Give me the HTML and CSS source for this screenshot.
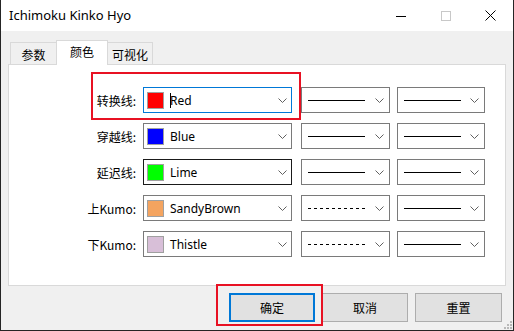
FILE: index.html
```html
<!DOCTYPE html>
<html lang="zh">
<head>
<meta charset="utf-8">
<title>Ichimoku Kinko Hyo</title>
<link rel="stylesheet" href="styles.css">
</head>
<body>
<div class="window">
  <div class="titlebar">
    <div class="title">Ichimoku Kinko Hyo</div>
    <div class="caption">
      <div class="cbtn"><svg width="10" height="10" viewBox="0 0 10 10"><line x1="0" y1="5.5" x2="10" y2="5.5" stroke="#000" stroke-width="1"/></svg></div>
      <div class="cbtn"><svg width="10" height="10" viewBox="0 0 10 10"><rect x="0.5" y="0.5" width="9" height="9" fill="none" stroke="#c8c8c8" stroke-width="1"/></svg></div>
      <div class="cbtn"><svg width="11" height="11" viewBox="0 0 11 11"><path d="M0.5 0.5 L10.5 10.5 M10.5 0.5 L0.5 10.5" stroke="#000" stroke-width="1" fill="none"/></svg></div>
    </div>
  </div>
  <div class="client">
    <div class="tabs">
      <div class="tab t1">参数</div>
      <div class="tab active">颜色</div>
      <div class="tab t3">可视化</div>
    </div>
    <div class="panel">
      <div class="row">
        <div class="label">转换线:</div>
        <div class="combo color focused"><span class="sw" style="background:#ff0000"></span><span class="caret"></span><span class="cname">Red</span><svg class="chev" width="9" height="5" viewBox="0 0 9 5"><path d="M0.5 0.5 L4.5 4.5 L8.5 0.5" stroke="#606060" fill="none"/></svg></div>
        <div class="combo line"><span class="ln solid"></span><svg class="chev" width="9" height="5" viewBox="0 0 9 5"><path d="M0.5 0.5 L4.5 4.5 L8.5 0.5" stroke="#606060" fill="none"/></svg></div>
        <div class="combo line l2"><span class="ln solid"></span><svg class="chev" width="9" height="5" viewBox="0 0 9 5"><path d="M0.5 0.5 L4.5 4.5 L8.5 0.5" stroke="#606060" fill="none"/></svg></div>
      </div>
      <div class="row">
        <div class="label">穿越线:</div>
        <div class="combo color"><span class="sw" style="background:#0000ff"></span><span class="cname">Blue</span><svg class="chev" width="9" height="5" viewBox="0 0 9 5"><path d="M0.5 0.5 L4.5 4.5 L8.5 0.5" stroke="#606060" fill="none"/></svg></div>
        <div class="combo line"><span class="ln solid"></span><svg class="chev" width="9" height="5" viewBox="0 0 9 5"><path d="M0.5 0.5 L4.5 4.5 L8.5 0.5" stroke="#606060" fill="none"/></svg></div>
        <div class="combo line l2"><span class="ln solid"></span><svg class="chev" width="9" height="5" viewBox="0 0 9 5"><path d="M0.5 0.5 L4.5 4.5 L8.5 0.5" stroke="#606060" fill="none"/></svg></div>
      </div>
      <div class="row">
        <div class="label">延迟线:</div>
        <div class="combo color hover"><span class="sw" style="background:#00ff00"></span><span class="cname">Lime</span><svg class="chev" width="9" height="5" viewBox="0 0 9 5"><path d="M0.5 0.5 L4.5 4.5 L8.5 0.5" stroke="#606060" fill="none"/></svg></div>
        <div class="combo line"><span class="ln solid"></span><svg class="chev" width="9" height="5" viewBox="0 0 9 5"><path d="M0.5 0.5 L4.5 4.5 L8.5 0.5" stroke="#606060" fill="none"/></svg></div>
        <div class="combo line l2"><span class="ln solid"></span><svg class="chev" width="9" height="5" viewBox="0 0 9 5"><path d="M0.5 0.5 L4.5 4.5 L8.5 0.5" stroke="#606060" fill="none"/></svg></div>
      </div>
      <div class="row">
        <div class="label">上Kumo:</div>
        <div class="combo color"><span class="sw" style="background:#f4a460"></span><span class="cname">SandyBrown</span><svg class="chev" width="9" height="5" viewBox="0 0 9 5"><path d="M0.5 0.5 L4.5 4.5 L8.5 0.5" stroke="#606060" fill="none"/></svg></div>
        <div class="combo line"><span class="ln dash"></span><svg class="chev" width="9" height="5" viewBox="0 0 9 5"><path d="M0.5 0.5 L4.5 4.5 L8.5 0.5" stroke="#606060" fill="none"/></svg></div>
        <div class="combo line l2"><span class="ln solid"></span><svg class="chev" width="9" height="5" viewBox="0 0 9 5"><path d="M0.5 0.5 L4.5 4.5 L8.5 0.5" stroke="#606060" fill="none"/></svg></div>
      </div>
      <div class="row">
        <div class="label">下Kumo:</div>
        <div class="combo color"><span class="sw" style="background:#d8bfd8"></span><span class="cname">Thistle</span><svg class="chev" width="9" height="5" viewBox="0 0 9 5"><path d="M0.5 0.5 L4.5 4.5 L8.5 0.5" stroke="#606060" fill="none"/></svg></div>
        <div class="combo line"><span class="ln dash"></span><svg class="chev" width="9" height="5" viewBox="0 0 9 5"><path d="M0.5 0.5 L4.5 4.5 L8.5 0.5" stroke="#606060" fill="none"/></svg></div>
        <div class="combo line l2"><span class="ln solid"></span><svg class="chev" width="9" height="5" viewBox="0 0 9 5"><path d="M0.5 0.5 L4.5 4.5 L8.5 0.5" stroke="#606060" fill="none"/></svg></div>
      </div>
    </div>
    <div class="buttons">
      <div class="btn default">确定</div>
      <div class="btn">取消</div>
      <div class="btn wide">重置</div>
    </div>
  </div>
  <div class="mark mark1"></div>
  <div class="mark mark2"></div>
  <svg class="grip" width="8" height="8" viewBox="0 0 8 8">
    <rect x="6" y="0" width="2" height="2" fill="#b8b8b8"/>
    <rect x="3" y="3" width="2" height="2" fill="#b8b8b8"/>
    <rect x="6" y="3" width="2" height="2" fill="#b8b8b8"/>
    <rect x="0" y="6" width="2" height="2" fill="#b8b8b8"/>
    <rect x="3" y="6" width="2" height="2" fill="#b8b8b8"/>
    <rect x="6" y="6" width="2" height="2" fill="#b8b8b8"/>
  </svg>
</div>
</body>
</html>
```
FILE: styles.css
```css
html, body {
  margin: 0;
  padding: 0;
}
body {
  background: #252525;
  width: 514px;
  height: 331px;
  overflow: hidden;
  font-family: "Noto Sans", "Noto Sans CJK SC", sans-serif;
  font-size: 12px;
  color: #000;
}
.window {
  position: relative;
  margin-left: 1px;
  width: 512px;
  height: 330px;
  background: #f0f0f0;
  display: flex;
  flex-direction: column;
}
.titlebar {
  height: 31px;
  background: #fff;
  display: flex;
  align-items: center;
  justify-content: space-between;
}
.title {
  padding-left: 8px;
  font-size: 13px;
  margin-top: -1px;
}
.caption {
  display: flex;
  height: 31px;
}
.cbtn {
  width: 45px;
  height: 31px;
  display: flex;
  align-items: center;
  justify-content: center;
}
.cbtn svg { display: block; }
.client {
  flex: 1;
  padding: 9px 7px 0 7px;
  display: flex;
  flex-direction: column;
}
.tabs {
  display: flex;
  align-items: flex-end;
  height: 24px;
  padding-left: 2px;
  font-family: "Noto Sans CJK SC", sans-serif;
}
.tab {
  box-sizing: border-box;
  height: 22px;
  border: 1px solid #d9d9d9;
  border-bottom: none;
  background: #f0f0f0;
  display: flex;
  align-items: center;
  justify-content: center;
  padding-top: 1px;
}
.t1 { width: 46px; border-right: none; }
.t3 { width: 45px; border-left: none; }
.tab.active {
  width: 52px;
  height: 25px;
  margin-bottom: -1px;
  background: #fff;
  position: relative;
  z-index: 1;
  padding-top: 0;
  padding-bottom: 3px;
}
.panel {
  box-sizing: border-box;
  height: 222px;
  background: #fff;
  border: 1px solid #d9d9d9;
  padding-top: 22px;
  display: flex;
  flex-direction: column;
  gap: 10px;
}
.row {
  display: flex;
  align-items: center;
  height: 26px;
}
.label {
  width: 127px;
  margin-right: 7px;
  text-align: right;
  font-family: "Noto Sans CJK SC", sans-serif;
  font-size: 12px;
}
.combo {
  box-sizing: border-box;
  height: 26px;
  border: 1px solid #7a7a7a;
  background: #fff;
  display: flex;
  align-items: center;
  position: relative;
}
.combo.color {
  width: 149px;
  padding-left: 3px;
}
.combo.focused { border-color: #0078d7; }
.combo.hover { border-color: #1a1a1a; }
.combo.line {
  width: 89px;
  margin-left: 9px;
  padding-left: 6px;
}
.combo.line.l2 {
  width: 88px;
  margin-left: 7px;
}
.sw {
  box-sizing: border-box;
  width: 17px;
  height: 17px;
  border: 1px solid #a0a0a0;
  flex: none;
}
.caret {
  width: 1px;
  height: 15px;
  background: #000;
  margin-left: 6px;
  margin-right: -1px;
}
.cname {
  margin-left: 6px;
  font-size: 12px;
  flex: 1;
}
.caret + .cname { margin-left: 0; }
.chev {
  display: block;
  position: absolute;
  right: 4px;
  top: 10px;
}
.line .chev { right: 5px; }
.ln {
  display: block;
  width: 57px;
  height: 1px;
}
.ln.solid { background: #000; }
.ln.dash {
  background: repeating-linear-gradient(to right, #000 0 3px, transparent 3px 6px);
}
.buttons {
  display: flex;
  justify-content: flex-end;
  gap: 7px;
  margin-top: 7px;
  padding-right: 4px;
  font-family: "Noto Sans CJK SC", sans-serif;
}
.btn {
  box-sizing: border-box;
  width: 86px;
  height: 29px;
  background: #e1e1e1;
  border: 1px solid #adadad;
  display: flex;
  align-items: center;
  justify-content: center;
}
.btn.wide { width: 87px; }
.btn.default { border: 2px solid #0078d7; }
.mark {
  position: absolute;
  box-sizing: border-box;
  border: 2px solid #e81123;
}
.mark1 {
  left: 90px;
  top: 72px;
  width: 210px;
  height: 48px;
}
.mark2 {
  left: 215px;
  top: 284px;
  width: 107px;
  height: 42px;
}
.grip {
  position: absolute;
  right: 1px;
  bottom: 1px;
}
```
